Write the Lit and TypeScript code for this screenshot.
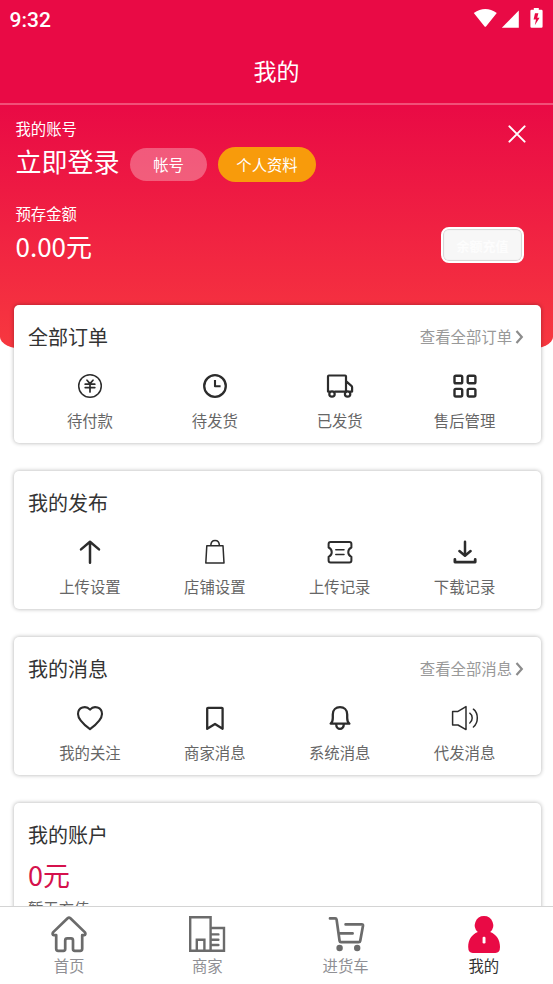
import { LitElement, html, svg, css, nothing } from "lit";
import { customElement, property } from "lit/decorators.js";

const glyphs: Record<string, unknown> = {
  pay: svg`<circle r="11.3" stroke-width="1.5"/><path stroke-width="1.7" d="M-3-5.8 0-2.4 3-5.8M-4.8-1.8H4.8M-4.8 1.6H4.8M0-2.4V6"/>`,
  clock: svg`<circle r="10.8" stroke-width="2.3"/><path stroke-width="2.1" stroke-linecap="butt" d="M0-6V.2H5.6"/>`,
  truck: svg`<path stroke-width="2.2" d="M-10.6 5.6H-12V-9.6q0-.9.9-.9H5.1q.9 0 .9.9V5.6M-5 5.6H4.6M6-4.8 11.4-.2q.7.6.7 1.4V5.6H10.4"/><circle cx="-8" cy="8" r="2.7" stroke-width="2.2"/><circle cx="7.6" cy="8" r="2.7" stroke-width="2.2"/>`,
  grid: svg`<g stroke-width="2.4"><rect x="-10.5" y="-10.3" width="7.7" height="7.6" rx="1.4"/><rect x="2.7" y="-10.3" width="7.7" height="7.6" rx="1.4"/><rect x="-10.5" y="2.9" width="7.7" height="7.6" rx="1.4"/><rect x="2.7" y="2.9" width="7.7" height="7.6" rx="1.4"/></g>`,
  up: svg`<path stroke-width="2.5" d="M0-10V10.8M-9-2.6 0-10.2 9-2.6"/>`,
  bag: svg`<path stroke-width="1.5" d="M-8.2-6.2H8L9 11.1H-9.2ZM-4.2-6.4C-4-13.2 4.2-13.2 4.4-6.4"/>`,
  ticket: svg`<path stroke-width="2" d="M-9.4-9.9H9.4q2 0 2 2v3.4C7.2-2.4 7.2 2.8 11.4 4.8V8.4q0 2-2 2H-9.4q-2 0-2-2V4.8C-7.2 2.8-7.2-2.4-11.4-4.5V-7.9q0-2 2-2Z"/><path stroke-width="1.5" d="M-4.2-2.2H4M-4.2 2.4H4"/>`,
  down: svg`<path stroke-width="2.5" d="M0-10.3V3.4M-5.6-1 0 3.7 5.6-1"/><path stroke-width="2.8" d="M-10.1 7.4V10.1H10.2V7.4"/>`,
  heart: svg`<path stroke-width="2.1" d="M0 11.2C-6.2 6.6-12 1.6-12-4-12-10.6-4.2-13 0-8.4 4.2-13 12-10.6 12-4 12 1.6 6.2 6.6 0 11.2Z"/>`,
  mark: svg`<path stroke-width="2.3" d="M-7.8-9.4q0-.8.8-.8H6.8q.8 0 .8.8V10.8L0 6-7.8 10.8Z"/>`,
  bell: svg`<path stroke-width="2.3" d="M-9.4 5.6C-7.6 4.4-7.2 3-7.2 0V-3.6C-7.2-8.4-4-10.8 0-10.8S7.2-8.4 7.2-3.6V0C7.2 3 7.6 4.4 9.4 5.6ZM-3.8 6.2C-3.8 12.4 3.8 12.4 3.8 6.2"/>`,
  horn: svg`<path stroke-width="1.5" d="M-12.4-6.6H-7L1-11.4V11.6L-7 7H-12.4ZM4.8-4.8C8-2.6 8 2.8 4.8 5M8.4-8.8C13.6-4.6 13.6 4.8 8.4 9"/>`,
};

const tabGlyphs: Record<string, unknown> = {
  home: svg`<path stroke-width="2.7" d="M16.6 2.2Q18 1 19.4 2.2L34 16.4Q35.2 18.8 33 19.2H31.2V32.8Q31.2 34.8 29.2 34.8H23.8Q22 34.8 22 33V24.4Q22 22.4 20 22.4H16.4Q14.2 22.4 14.2 24.4V33Q14.2 34.8 12.4 34.8H7.2Q5.2 34.8 5.2 32.8V19.2H3Q.8 18.8 2 16.4Z"/>`,
  shop: svg`<path stroke-width="2.4" stroke-linejoin="miter" d="M1.2 1.2H21.6V34.8H1.2ZM21.6 12H35V34.8H21.6M7.8 34V23.8H15.4V34M22 18.4H29.4M22 23.7H29.4M22 29H29.4"/>`,
  cart: svg`<path stroke-width="2.7" d="M2 2.4H7.2Q8.4 2.4 8.6 3.6L11.6 25Q11.8 26.2 13 26.2H30.8Q32 26.2 32.2 25L35 9.8Q35.2 8.4 33.8 8.4H17.6M12.4 17.4H24.6"/><circle cx="11.6" cy="32" r="3.2" fill="currentColor" stroke="none"/><circle cx="29.2" cy="32" r="3.2" fill="currentColor" stroke="none"/>`,
  me: svg`<path fill="currentColor" stroke="none" d="M18 0a9.2 9.2 0 0 1 6.2 16C30.6 18.6 34 24 34 31Q34 36.9 29.4 36.9H6.8Q2.2 36.9 2.2 31C2.2 24 5.6 18.6 11.8 16A9.2 9.2 0 0 1 18 0Z"/><rect x="16.6" y="20.8" width="2.9" height="6.6" rx="1.2" fill="#fff" stroke="none"/>`,
};

interface Entry {
  icon: string;
  label: string;
}

@customElement("menu-card")
class MenuCard extends LitElement {
  @property() heading = "";
  @property() more = "";
  @property({ attribute: false }) entries: Entry[] = [];

  static styles = css`
    :host {
      display: block;
      box-sizing: border-box;
      height: 138px;
      padding: 11px 14px 0;
      border-radius: 5px;
      background: #fff;
      box-shadow: 0 0 4px rgba(0, 0, 0, 0.32);
    }
    .head {
      display: flex;
      align-items: center;
      justify-content: space-between;
      height: 40px;
      padding-right: 3px;
    }
    .title {
      font-size: 20px;
      color: #333;
    }
    .more {
      display: flex;
      align-items: center;
      gap: 3px;
      font-size: 15.36px;
      color: #999;
    }
    .chevron {
      width: 9px;
      height: 16px;
      margin-top: 1px;
      fill: none;
      stroke: #8c8c8c;
      stroke-width: 2.2;
    }
    .items {
      display: grid;
      grid-template-columns: repeat(4, 1fr);
      padding-top: 17px;
      margin-left: -0.5px;
    }
    .item {
      display: flex;
      flex-direction: column;
      align-items: center;
      gap: 10px;
      font-size: 15.36px;
      line-height: 22px;
      color: #666;
    }
    .icon {
      width: 26px;
      height: 26px;
      overflow: visible;
      fill: none;
      stroke: #2c2c2c;
      stroke-linecap: round;
      stroke-linejoin: round;
    }
  `;

  render() {
    return html`
      <div class="head">
        <span class="title">${this.heading}</span>
        ${this.more
          ? html`<span class="more">${this.more}
              <svg class="chevron" viewBox="0 0 9 16"><path d="M1.5 2 6.8 8 1.5 14" /></svg></span>`
          : nothing}
      </div>
      <div class="items">
        ${this.entries.map(
          (e) => html`<div class="item">
            <svg class="icon" viewBox="-13 -13 26 26">${glyphs[e.icon]}</svg>
            <span>${e.label}</span>
          </div>`
        )}
      </div>
    `;
  }
}

@customElement("app-root")
class AppRoot extends LitElement {
  static styles = css`
    :host {
      display: flex;
      flex-direction: column;
      height: 984px;
      overflow: hidden;
      background: #fff;
      font-family: "Noto Sans CJK SC", sans-serif;
      font-weight: 400;
    }
    .top {
      flex: none;
      box-sizing: border-box;
      height: 105px;
      background: #e90a45;
      border-bottom: 2px solid #f15078;
      color: #fff;
    }
    .status {
      display: flex;
      align-items: center;
      justify-content: space-between;
      height: 38px;
      padding: 0 10px 0 9.5px;
    }
    .time {
      font: 500 21px/38px Roboto, sans-serif;
      padding-top: 1px;
    }
    .signals {
      width: 70px;
      height: 22px;
      fill: #fff;
    }
    .title {
      height: 65px;
      font-size: 23px;
      line-height: 65px;
      text-align: center;
    }
    .body {
      flex: 1;
      min-height: 0;
      overflow: hidden;
    }
    .banner {
      box-sizing: border-box;
      height: 244px;
      padding: 12px 15.5px 0;
      border-radius: 0 0 24px 24px / 0 0 12px 12px;
      background: linear-gradient(#e90a45, #f7383f);
      color: #fff;
    }
    .row {
      display: flex;
      justify-content: space-between;
    }
    .caption {
      font-size: 15.36px;
      line-height: 22px;
    }
    .account {
      display: flex;
      align-items: center;
      height: 38px;
      margin-top: 6px;
    }
    .login {
      width: 114.5px;
      font-size: 26px;
      line-height: 38px;
      margin-top: -6px;
    }
    .pill {
      width: 77px;
      height: 33px;
      border-radius: 17px;
      background: rgba(255, 255, 255, 0.3);
      font-size: 15.36px;
      line-height: 33px;
      text-align: center;
    }
    .profile {
      width: 98px;
      height: 35px;
      margin-left: 11px;
      border-radius: 18px;
      line-height: 35px;
      background: #f89b0b;
    }
    .close {
      width: 20px;
      height: 20px;
      margin: 7px 10.5px 0 0;
      fill: none;
      stroke: #fff;
      stroke-width: 2;
      stroke-linecap: round;
    }
    .funds {
      padding-top: 19px;
    }
    .amount {
      font-size: 26px;
      line-height: 38px;
      margin-top: 3px;
    }
    .recharge {
      box-sizing: border-box;
      width: 83px;
      height: 36px;
      margin: 44px 13.5px 0 0;
      border: 2px solid #fff;
      border-radius: 8px;
      background: #f7f7f7;
      box-shadow: inset 0 0 1px 0.5px #b8b8b8;
      color: #fdfdfd;
      font-size: 13px;
      font-weight: 700;
      line-height: 33px;
      text-align: center;
    }
    .cards {
      display: flex;
      flex-direction: column;
      gap: 28px;
      margin: -44px 12px 0 14px;
    }
    .wallet {
      height: 180px;
      box-sizing: border-box;
      padding: 12px 14px;
      border-radius: 5px;
      background: #fff;
      box-shadow: 0 0 4px rgba(0, 0, 0, 0.32);
    }
    .wallet-title {
      font-size: 20px;
      line-height: 40px;
      color: #333;
    }
    .wallet-sum {
      margin-top: 1px;
      font-size: 27px;
      line-height: 38px;
      color: #d5114c;
    }
    .wallet-note {
      margin-top: 3px;
      font-size: 15.36px;
      line-height: 22px;
      color: #666;
    }
    .tabs {
      flex: none;
      box-sizing: border-box;
      display: grid;
      grid-template-columns: repeat(4, 1fr);
      height: 78px;
      padding-top: 9px;
      border-top: 1px solid #d4d4d4;
      background: #fff;
    }
    .tab {
      display: flex;
      flex-direction: column;
      align-items: center;
      gap: 2px;
      font-size: 15.36px;
      line-height: 22px;
      color: #8f8f94;
    }
    .tab-icon {
      width: 36px;
      height: 36px;
      overflow: visible;
      color: #6b6b6b;
      fill: none;
      stroke: currentColor;
      stroke-linecap: round;
      stroke-linejoin: round;
    }
    .active {
      color: #333;
    }
    .active .tab-icon {
      color: #e90a45;
    }
  `;

  private tabs: Entry[] = [
    { icon: "home", label: "首页" },
    { icon: "shop", label: "商家" },
    { icon: "cart", label: "进货车" },
    { icon: "me", label: "我的" },
  ];

  render() {
    return html`
      <div class="top">
        <div class="status">
          <span class="time">9:32</span>
          <svg class="signals" viewBox="0 0 70 22">
            <path d="M.8 5Q12.3-2.8 23.8 5L13.2 18.2Q12.3 19.4 11.4 18.2Z" />
            <path d="M45.8 2.6V19.8H28.8Z" />
            <path fill-rule="evenodd" d="M60.8 0h5v1.8h2.6q1.2 0 1.2 1.2v15.6q0 1.2-1.2 1.2h-9.8q-1.2 0-1.2-1.2V3q0-1.2 1.2-1.2h2.2ZM62 5.2 60.6 11.4H63L61.8 17.2 66.6 9.8H64.2L65.4 5.2Z" />
          </svg>
        </div>
        <div class="title">我的</div>
      </div>
      <div class="body">
        <div class="banner">
          <div class="row">
            <div>
              <div class="caption">我的账号</div>
              <div class="account">
                <span class="login">立即登录</span>
                <span class="pill">帐号</span>
                <span class="pill profile">个人资料</span>
              </div>
            </div>
            <svg class="close" viewBox="0 0 20 20"><path d="M2.4 2.4 17.6 17.6M17.6 2.4 2.4 17.6" /></svg>
          </div>
          <div class="row">
            <div class="funds">
              <div class="caption">预存金额</div>
              <div class="amount">0.00元</div>
            </div>
            <div class="recharge">余额充值</div>
          </div>
        </div>
        <div class="cards">
          <menu-card heading="全部订单" more="查看全部订单" .entries=${[
            { icon: "pay", label: "待付款" },
            { icon: "clock", label: "待发货" },
            { icon: "truck", label: "已发货" },
            { icon: "grid", label: "售后管理" },
          ]}></menu-card>
          <menu-card heading="我的发布" .entries=${[
            { icon: "up", label: "上传设置" },
            { icon: "bag", label: "店铺设置" },
            { icon: "ticket", label: "上传记录" },
            { icon: "down", label: "下载记录" },
          ]}></menu-card>
          <menu-card heading="我的消息" more="查看全部消息" .entries=${[
            { icon: "heart", label: "我的关注" },
            { icon: "mark", label: "商家消息" },
            { icon: "bell", label: "系统消息" },
            { icon: "horn", label: "代发消息" },
          ]}></menu-card>
          <div class="wallet">
            <div class="wallet-title">我的账户</div>
            <div class="wallet-sum">0元</div>
            <div class="wallet-note">暂无充值</div>
          </div>
        </div>
      </div>
      <div class="tabs">
        ${this.tabs.map(
          (t) => html`<div class="tab ${t.icon === "me" ? "active" : ""}">
            <svg class="tab-icon" viewBox="0 0 36 36">${tabGlyphs[t.icon]}</svg>
            <span>${t.label}</span>
          </div>`
        )}
      </div>
    `;
  }
}
